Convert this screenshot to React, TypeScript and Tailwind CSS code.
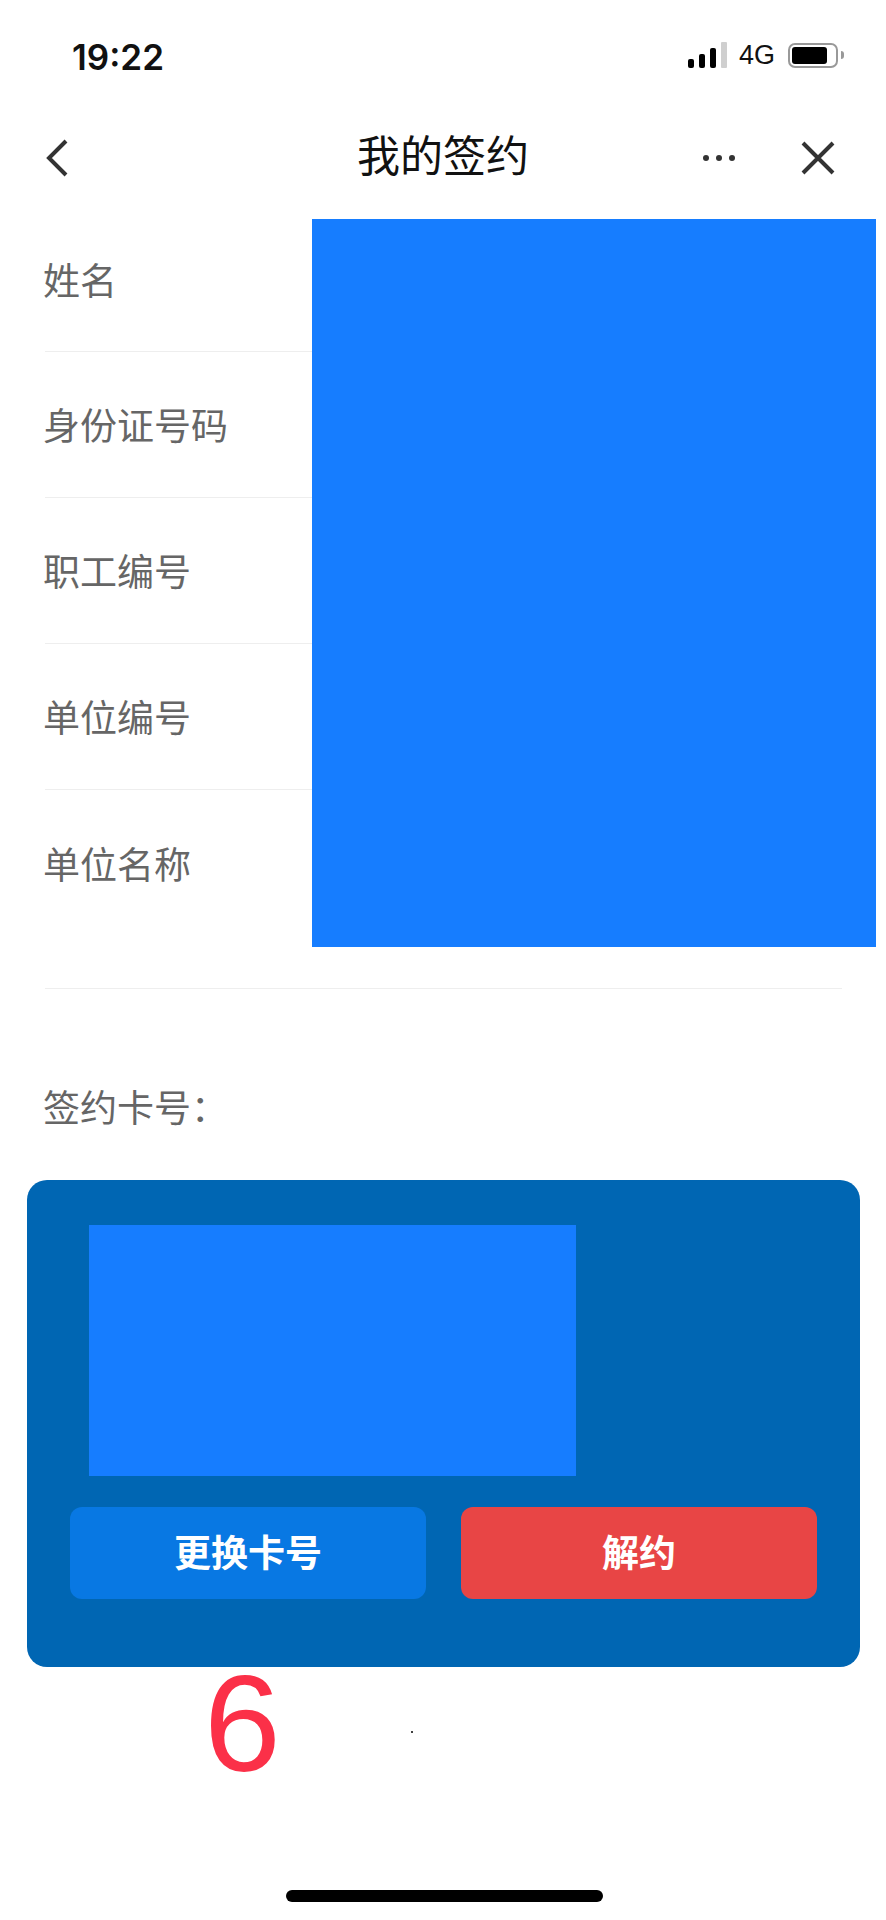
const cjk = "font-['Liberation_Sans','Noto_Sans_CJK_SC',sans-serif]";

const rows = [
  { label: "身份证号码" },
  { label: "职工编号" },
  { label: "单位编号" },
];

export default function App() {
  return (
    <main className={`${cjk} relative h-[1920px] w-[886px] overflow-hidden bg-white`}>
      {/* Status bar */}
      <div className="flex h-[112px] items-start justify-between pl-[72px] pr-[42px] pt-[37px]">
        <span className="font-['Inter',sans-serif] text-[35px] leading-[40px] font-semibold text-[#111]">19:22</span>
        <div className="flex items-center pt-[5px]">
          <div className="flex h-[26px] items-end gap-[5px]">
            <div className="h-[9px] w-[6px] rounded-[2px] bg-black" />
            <div className="h-[14px] w-[6px] rounded-[2px] bg-black" />
            <div className="h-[20px] w-[6px] rounded-[2px] bg-black" />
            <div className="h-[26px] w-[6px] rounded-[1px] bg-[#cfcfcf]" />
          </div>
          <span className="ml-[12px] text-[27px] leading-[26px] text-[#111]">4G</span>
          <div className="ml-[13px] flex h-[25px] w-[50px] items-center rounded-[7px] border-2 border-[#999] pl-[2px]">
            <div className="h-[17px] w-[35px] rounded-[3px] bg-black" />
          </div>
          <div className="ml-[3px] h-[8px] w-[3px] rounded-r-full bg-[#999]" />
        </div>
      </div>

      {/* Nav bar */}
      <div className="relative flex h-[107px] items-center justify-between pb-[16px] pl-[44px] pr-[50px]">
        <svg width="26" height="38" viewBox="0 0 26 38" fill="none" stroke="#333" strokeWidth="4">
          <path d="M22 2 5 19l17 17" />
        </svg>
        <span className="absolute left-[357px] top-[19px] text-[43px] leading-[52px] text-[#111]">我的签约</span>
        <div className="flex items-center gap-[65px]">
          <div className="flex gap-[7px]">
            <div className="h-[6px] w-[6px] rounded-full bg-[#333]" />
            <div className="h-[6px] w-[6px] rounded-full bg-[#333]" />
            <div className="h-[6px] w-[6px] rounded-full bg-[#333]" />
          </div>
          <svg width="36" height="36" viewBox="0 0 36 36" fill="none" stroke="#333" strokeWidth="4">
            <path d="M3 3l30 30M33 3 3 33" />
          </svg>
        </div>
      </div>

      {/* Info rows */}
      <div className="pl-[45px] pr-[44px] text-[37px] text-[#666]">
        <div className="flex h-[133px] items-center border-b border-[#eeeeee] pb-[5px]">
          <span className="-ml-[2px]">姓名</span>
        </div>
        {rows.map((r) => (
          <div key={r.label} className="flex h-[146px] items-center border-b border-[#eeeeee] pt-[7px]">
            <span className="-ml-[2px]">{r.label}</span>
          </div>
        ))}
        <div className="flex h-[199px] items-start border-b border-[#eeeeee] pt-[53px] leading-[48px]">
          <span className="-ml-[2px]">单位名称</span>
        </div>
      </div>

      <div className="pl-[43px] pt-[97px] text-[37px] leading-[48px] text-[#666]">签约卡号：</div>

      {/* Card */}
      <div className="ml-[27px] mt-[46px] h-[487px] w-[833px] rounded-[20px] bg-[#0066b3] px-[43px] pt-[45px]">
        <div className="ml-[19px] h-[251px] w-[487px] bg-[#167dff]" />
        <div className="mt-[31px] flex justify-between">
          <button className="h-[92px] w-[356px] rounded-[12px] bg-[#0878e3] pt-[3px] text-[37px] font-semibold text-white">更换卡号</button>
          <button className="h-[92px] w-[356px] rounded-[12px] bg-[#e84545] pt-[3px] text-[37px] font-semibold text-white">解约</button>
        </div>
      </div>

      {/* Redaction over the values */}
      <div className="absolute left-[312px] top-[219px] h-[728px] w-[564px] bg-[#167dff]" />

      {/* Hand-added marks */}
      <span className="absolute left-[204px] top-[1645px] text-[138px] leading-[156px] text-[#fb3048]">6</span>
      <div className="absolute left-[411px] top-[1731px] h-[2px] w-[2px] rounded-full bg-black" />

      {/* Home indicator */}
      <div className="absolute bottom-[18px] left-[286px] h-[12px] w-[317px] rounded-full bg-black" />
    </main>
  );
}
